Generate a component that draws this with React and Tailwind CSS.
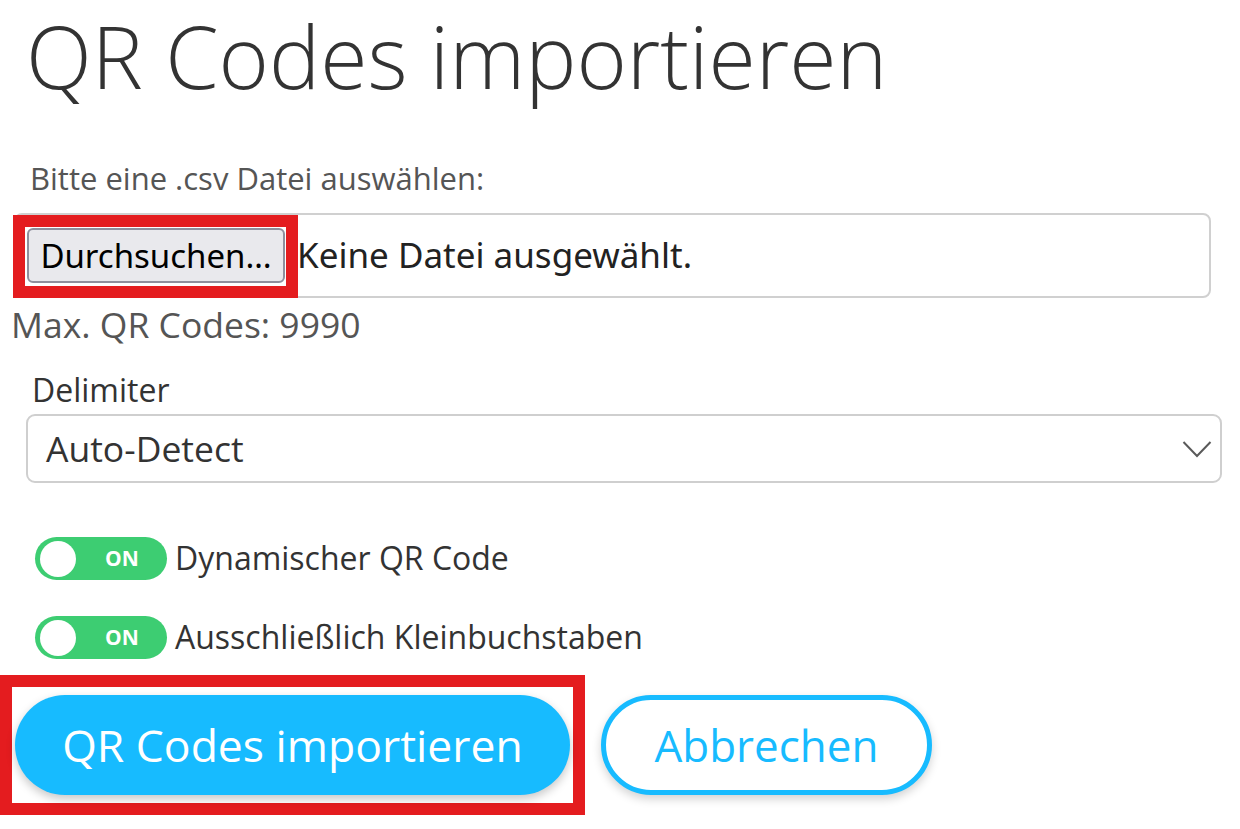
import React from 'react';

const Toggle = ({ label }) => (
  <div className="flex items-center h-[44px] ml-[35px]">
    <div className="relative w-[132px] h-[43px] rounded-full bg-[#3dcd72] flex items-center">
      <span className="absolute left-[5px] top-[4px] w-[36px] h-[36px] rounded-full bg-white" />
      <span className="ml-[70px] text-white font-bold text-[21px] leading-none">ON</span>
    </div>
    <span className="ml-[8px] text-[32px] text-[#333] leading-[44px]">{label}</span>
  </div>
);

export default function App() {
  return (
    <div className="w-[1240px] h-[829px] overflow-hidden bg-white font-['Open_Sans',sans-serif]">
      <h1 className="-mt-[4px] ml-[26px] h-[120px] text-[86px] font-light leading-[120px] text-[#333] whitespace-nowrap">
        QR Codes importieren
      </h1>

      <div className="mt-[44px] ml-[30px] h-[36px] text-[31px] leading-[36px] text-[#555]">
        Bitte eine .csv Datei auswählen:
      </div>

      {/* file input */}
      <div className="relative mt-[17px] ml-[14px] w-[1197px] h-[85px] border-2 border-[#d0d0d0] rounded-[8px] flex items-center pl-[11px]">
        <button className="h-[55px] w-[258px] rounded-[6px] border-2 border-[#8f8f9d] bg-[#e9e9ed] text-black text-[33px] leading-none font-['Noto_Sans',sans-serif] flex items-center justify-center">
          Durchsuchen…
        </button>
        <span className="ml-[12px] text-[35px] text-[#222] font-['Noto_Sans',sans-serif]">Keine Datei ausgewählt.</span>
        <div className="absolute left-[-3px] top-[0px] w-[285px] h-[83px] border-[12px] border-[#e41c1f]" />
      </div>

      <div className="mt-[6px] ml-[11px] h-[40px] text-[35.5px] leading-[40px] text-[#555]">Max. QR Codes: 9990</div>

      <div className="mt-[28px] ml-[32px] h-[36px] text-[32px] leading-[36px] text-[#333]">Delimiter</div>

      <div className="mt-[6px] ml-[26px] w-[1196px] h-[69px] border-2 border-[#cfcfcf] rounded-[9px] flex items-center justify-between pl-[18px] pr-[8px]">
        <span className="text-[35.5px] text-[#333]">Auto-Detect</span>
        <svg width="30" height="18" viewBox="0 0 30 18" fill="none" stroke="#5a5a5a" strokeWidth="2">
          <path d="M1.5 2 L15 16 L28.5 2" />
        </svg>
      </div>

      <div className="mt-[53px] flex flex-col gap-[35px]">
        <Toggle label="Dynamischer QR Code" />
        <Toggle label="Ausschließlich Kleinbuchstaben" />
      </div>

      <div className="mt-[16px] flex items-center">
        <div className="border-[12px] border-[#e41c1f] py-[8px] px-[3px]">
          <button className="w-[555px] h-[100px] rounded-full bg-[#17bbff] text-white text-[44.5px] shadow-[0_4px_10px_rgba(0,0,0,0.22)]">
            QR Codes importieren
          </button>
        </div>
        <button className="ml-[16px] w-[331px] h-[100px] rounded-full bg-white border-[5px] border-[#17bbff] text-[#17bbff] text-[44px] shadow-[0_4px_10px_rgba(0,0,0,0.18)]">
          Abbrechen
        </button>
      </div>
    </div>
  );
}
